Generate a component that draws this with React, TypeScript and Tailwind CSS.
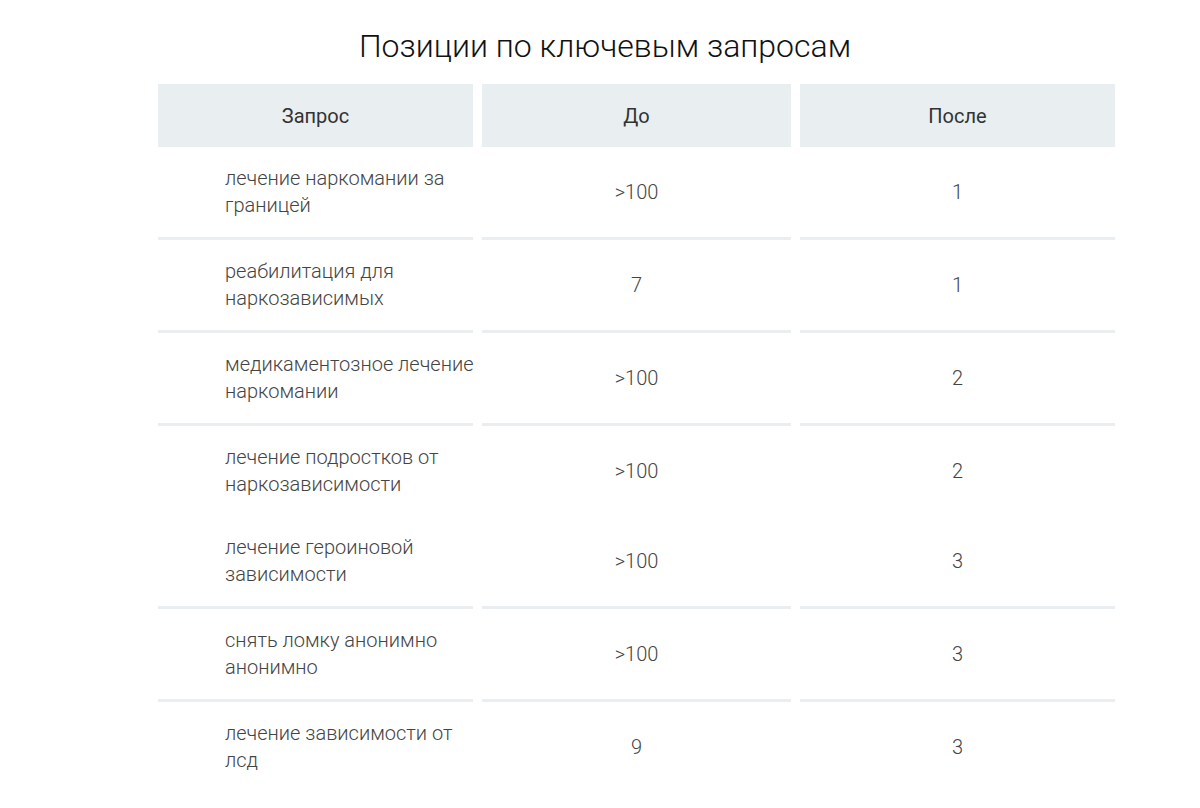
import React from "react";

type Row = { q: [string, string]; before: string; after: string; line: boolean };

const rows: Row[] = [
  { q: ["лечение наркомании за", "границей"], before: ">100", after: "1", line: true },
  { q: ["реабилитация для", "наркозависимых"], before: "7", after: "1", line: true },
  { q: ["медикаментозное лечение", "наркомании"], before: ">100", after: "2", line: true },
  { q: ["лечение подростков от", "наркозависимости"], before: ">100", after: "2", line: false },
  { q: ["лечение героиновой", "зависимости"], before: ">100", after: "3", line: true },
  { q: ["снять ломку анонимно", "анонимно"], before: ">100", after: "3", line: true },
  { q: ["лечение зависимости от", "лсд"], before: "9", after: "3", line: false },
];

export default function App() {
  return (
    <div
      className="w-[1200px] h-[808px] bg-white overflow-hidden"
      style={{ fontFamily: "Roboto, 'Open Sans', sans-serif" }}
    >
      <h1 className="pt-[26px] pl-[10px] text-center text-[32px] leading-[40px] font-light text-[#111111]">
        Позиции по ключевым запросам
      </h1>
      <div className="mt-[18px] ml-[158px] grid grid-cols-[315px_309px_315px] gap-x-[9px]">
        <div className="h-[63px] bg-[#e9eef0] flex items-center justify-center text-[20px] text-[#333333]">
          Запрос
        </div>
        <div className="h-[63px] bg-[#e9eef0] flex items-center justify-center text-[20px] text-[#333333]">
          До
        </div>
        <div className="h-[63px] bg-[#e9eef0] flex items-center justify-center text-[20px] text-[#333333]">
          После
        </div>
        {rows.map((r, i) => {
          const border = r.line ? "border-b-[3px] border-[#eaeef0]" : "";
          return (
            <React.Fragment key={i}>
              <div
                className={`h-[90px] box-content flex flex-col justify-center pl-[67px] text-[20px] leading-[27px] font-light text-[#444444] whitespace-nowrap ${border}`}
              >
                <span>{r.q[0]}</span>
                <span>{r.q[1]}</span>
              </div>
              <div
                className={`h-[90px] box-content flex items-center justify-center text-[20px] font-light text-[#444444] ${border}`}
              >
                {r.before}
              </div>
              <div
                className={`h-[90px] box-content flex items-center justify-center text-[20px] font-light text-[#444444] ${border}`}
              >
                {r.after}
              </div>
            </React.Fragment>
          );
        })}
      </div>
    </div>
  );
}
